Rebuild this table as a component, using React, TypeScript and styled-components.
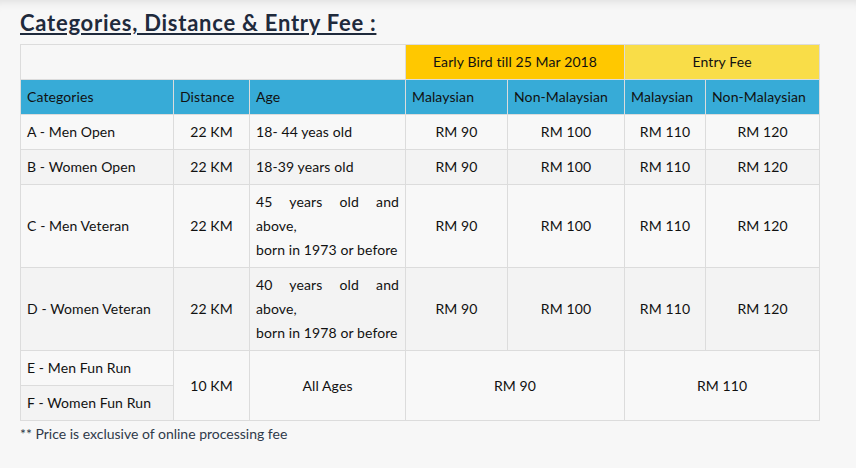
import * as React from 'react';
import styled, { createGlobalStyle } from 'styled-components';

type Row = {
  cat: string;
  dist: string;
  age: string[];
  prices: string[];
};

const rows: Row[] = [
  { cat: 'A - Men Open', dist: '22 KM', age: ['18- 44 yeas old'], prices: ['RM 90', 'RM 100', 'RM 110', 'RM 120'] },
  { cat: 'B - Women Open', dist: '22 KM', age: ['18-39 years old'], prices: ['RM 90', 'RM 100', 'RM 110', 'RM 120'] },
  {
    cat: 'C - Men Veteran',
    dist: '22 KM',
    age: ['45 years old and above,', 'born in 1973 or before'],
    prices: ['RM 90', 'RM 100', 'RM 110', 'RM 120'],
  },
  {
    cat: 'D - Women Veteran',
    dist: '22 KM',
    age: ['40 years old and above,', 'born in 1978 or before'],
    prices: ['RM 90', 'RM 100', 'RM 110', 'RM 120'],
  },
];

const App = () => {
  return (
    <Page>
      <GlobalStyle />
      <Title>Categories, Distance &amp; Entry Fee :</Title>
      <FeeTable>
        <colgroup>
          <col style={{ width: 153 }} />
          <col style={{ width: 76 }} />
          <col style={{ width: 156 }} />
          <col style={{ width: 102 }} />
          <col style={{ width: 117 }} />
          <col style={{ width: 81 }} />
          <col style={{ width: 114 }} />
        </colgroup>
        <thead>
          <tr>
            <GroupCell colSpan={3} />
            <GroupCell colSpan={2} $tone="early">
              Early Bird till 25 Mar 2018
            </GroupCell>
            <GroupCell colSpan={2} $tone="entry">
              Entry Fee
            </GroupCell>
          </tr>
          <tr>
            <HeadCell>Categories</HeadCell>
            <HeadCell>Distance</HeadCell>
            <HeadCell>Age</HeadCell>
            <HeadCell>Malaysian</HeadCell>
            <HeadCell>Non-Malaysian</HeadCell>
            <HeadCell>Malaysian</HeadCell>
            <HeadCell>Non-Malaysian</HeadCell>
          </tr>
        </thead>
        <tbody>
          {rows.map((r) => (
            <BodyRow key={r.cat}>
              <Cell>{r.cat}</Cell>
              <Cell $center>{r.dist}</Cell>
              <Cell>
                {r.age.map((line) => (
                  <AgeLine key={line}>{line}</AgeLine>
                ))}
              </Cell>
              {r.prices.map((p, i) => (
                <Cell key={i} $center>
                  {p}
                </Cell>
              ))}
            </BodyRow>
          ))}
          <BodyRow>
            <Cell>E - Men Fun Run</Cell>
            <Cell rowSpan={2} $center>
              10 KM
            </Cell>
            <Cell rowSpan={2} $center>
              All Ages
            </Cell>
            <Cell rowSpan={2} colSpan={2} $center>
              RM 90
            </Cell>
            <Cell rowSpan={2} colSpan={2} $center>
              RM 110
            </Cell>
          </BodyRow>
          <BodyRow>
            <Cell>F - Women Fun Run</Cell>
          </BodyRow>
        </tbody>
      </FeeTable>
      <Note>** Price is exclusive of online processing fee</Note>
    </Page>
  );
};

const GlobalStyle = createGlobalStyle`
  html, body {
    margin: 0;
    padding: 0;
    background: #f7f7f7;
  }
  body {
    font-family: Lato, "Open Sans", sans-serif;
    color: #111;
  }
`;

const Page = styled.div`
  min-height: 468px;
  padding: 10px 20px 0;
  box-sizing: border-box;
  background: #f7f7f7;
  box-shadow: inset 0 10px 10px -8px rgba(0, 0, 0, 0.1);
`;

const Title = styled.h2`
  margin: 0 0 9px;
  font-family: Lato, sans-serif;
  font-size: 22px;
  font-weight: 700;
  line-height: 25px;
  color: #1f2a3c;
  text-decoration: underline;
  text-underline-offset: 2px;
  letter-spacing: 0.75px;
`;

const FeeTable = styled.table`
  width: 799px;
  table-layout: fixed;
  border-collapse: collapse;
  font-size: 14px;
  line-height: 24px;
  letter-spacing: 0.1px;
  color: #111;
  td,
  th {
    border: 1px solid #dcdcdc;
  }
`;

const GroupCell = styled.th<{ $tone?: 'early' | 'entry' }>`
  height: 24px;
  padding: 5px 6px;
  font-weight: 400;
  text-align: center;
  background: ${({ $tone }) =>
    $tone === 'early' ? '#ffc800' : $tone === 'entry' ? '#f9dd48' : 'transparent'};
`;

const HeadCell = styled.th`
  padding: 5px 6px;
  font-weight: 400;
  text-align: left;
  background: #37abd7;
  white-space: nowrap;
`;

const BodyRow = styled.tr`
  background: #f8f8f8;
  &:nth-child(even) {
    background: #f3f3f3;
  }
`;

const Cell = styled.td<{ $center?: boolean }>`
  padding: 5px 6px;
  text-align: ${({ $center }) => ($center ? 'center' : 'left')};
  vertical-align: middle;
`;

const AgeLine = styled.div`
  text-align: justify;
`;

const Note = styled.p`
  margin: 4px 0 0;
  font-size: 14px;
  line-height: 18px;
  color: #2f3a4a;
`;

export default App;
